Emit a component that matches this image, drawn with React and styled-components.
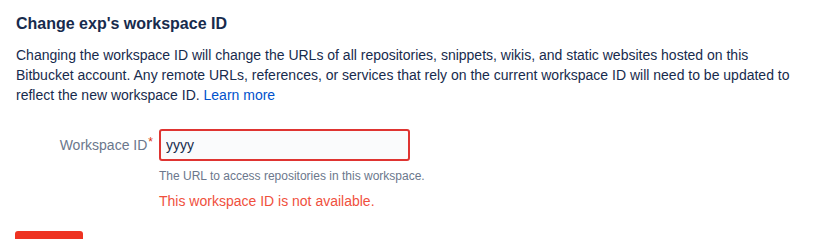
import React from "react";
import styled, { createGlobalStyle } from "styled-components";

const GlobalStyle = createGlobalStyle`
  html, body { margin: 0; padding: 0; background: #ffffff; }
  body {
    font-family: "Liberation Sans", Arial, sans-serif;
    color: #172b4d;
    -webkit-font-smoothing: antialiased;
  }
`;

const Page = styled.div`
  padding: 14px 16px 0 16px;
  height: 239px;
  box-sizing: border-box;
  overflow: hidden;
`;

const Heading = styled.h2`
  margin: 0;
  font-size: 16px;
  line-height: 20px;
  font-weight: 700;
  color: #172b4d;
`;

const Description = styled.p`
  margin: 11px 0 0 0;
  max-width: 792px;
  font-size: 14px;
  line-height: 20px;
  color: #172b4d;
`;

const Link = styled.a`
  color: #0052cc;
  text-decoration: none;
`;

const Form = styled.form`
  display: grid;
  grid-template-columns: 137px 251px;
  column-gap: 6px;
  margin-top: 24px;
`;

const Label = styled.label`
  grid-column: 1;
  align-self: center;
  text-align: right;
  font-size: 14px;
  line-height: 20px;
  color: #6b778c;
  white-space: nowrap;
`;

const Required = styled.span`
  color: #de350b;
  font-size: 12px;
  vertical-align: top;
  margin-left: 1px;
  position: relative;
  top: -3px;
`;

const Field = styled.div`
  grid-column: 2;
  display: flex;
  flex-direction: column;
`;

const Input = styled.input`
  box-sizing: border-box;
  width: 251px;
  height: 32px;
  margin: 0;
  padding: 0 5px;
  border: 2px solid ${(p) => (p.$invalid ? "#df3431" : "#dfe1e6")};
  border-radius: 3px;
  background: #fafbfc;
  font-family: "Liberation Sans", Arial, sans-serif;
  font-size: 14px;
  color: #172b4d;
  outline: none;
`;

const Help = styled.div`
  margin-top: 7px;
  font-size: 12px;
  line-height: 16px;
  color: #6b778c;
  white-space: nowrap;
`;

const ErrorText = styled.div`
  margin-top: 7px;
  font-size: 14px;
  line-height: 20px;
  color: #f0503d;
  white-space: nowrap;
`;

const Actions = styled.div`
  margin-top: 20px;
  margin-left: -1px;
`;

const DangerButton = styled.button`
  width: 68px;
  height: 32px;
  border: none;
  border-radius: 3px;
  background: #ee3322;
  color: #ffffff;
  font-family: "Liberation Sans", Arial, sans-serif;
  font-size: 14px;
  padding: 0;
`;

export default function App() {
  return (
    <>
      <GlobalStyle />
      <Page>
        <Heading>Change exp's workspace ID</Heading>
        <Description>
          Changing the workspace ID will change the URLs of all repositories, snippets, wikis, and static websites hosted on this
          Bitbucket account. Any remote URLs, references, or services that rely on the current workspace ID will need to be updated to
          reflect the new workspace ID. <Link href="#">Learn more</Link>
        </Description>
        <Form onSubmit={(e) => e.preventDefault()}>
          <Label htmlFor="ws-id">
            Workspace ID<Required>*</Required>
          </Label>
          <Field>
            <Input id="ws-id" $invalid defaultValue="yyyy" />
          </Field>
          <Field>
            <Help>The URL to access repositories in this workspace.</Help>
            <ErrorText>This workspace ID is not available.</ErrorText>
          </Field>
        </Form>
        <Actions>
          <DangerButton type="button">Change</DangerButton>
        </Actions>
      </Page>
    </>
  );
}
